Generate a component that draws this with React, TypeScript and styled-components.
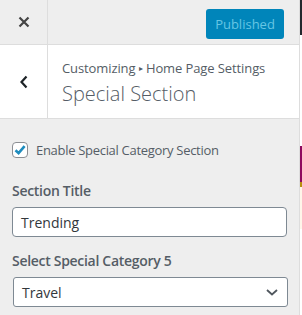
import styled, { createGlobalStyle } from "styled-components";

const GlobalStyle = createGlobalStyle`
    html, body {
        margin: 0;
        padding: 0;
        background: #fff;
    }
    body {
        font-family: "Open Sans", "Noto Sans", sans-serif;
    }
    * {
        box-sizing: border-box;
    }
`

function CloseIcon() {
    return (
        <svg width="12" height="12" viewBox="0 0 12 12">
            <path d="M1.5 1.5 L10.5 10.5 M10.5 1.5 L1.5 10.5" stroke="#444" strokeWidth="2.2" strokeLinecap="butt" />
        </svg>
    )
}

function BackIcon() {
    return (
        <svg width="10" height="14" viewBox="0 0 10 14">
            <path d="M7.5 1.5 L2.5 7 L7.5 12.5" stroke="#1d2327" strokeWidth="2.2" fill="none" />
        </svg>
    )
}

function CheckIcon() {
    return (
        <svg width="14" height="14" viewBox="0 0 14 14">
            <path d="M2.5 7.2 L5.6 10.2 L11.6 3.2" stroke="#1e8cbe" strokeWidth="2.6" fill="none" />
        </svg>
    )
}

function ChevronDown() {
    return (
        <svg width="14" height="10" viewBox="0 0 14 10">
            <path d="M2 3 L7 7.5 L12 3" stroke="#50575e" strokeWidth="1.8" fill="none" />
        </svg>
    )
}

function App() {
    return (
        <Page>
            <GlobalStyle />
            <Sidebar>
                <TopBar>
                    <CloseButton><CloseIcon /></CloseButton>
                    <TopBarSpacer />
                    <PublishButton>Published</PublishButton>
                </TopBar>
                <SectionHeader>
                    <BackButton><BackIcon /></BackButton>
                    <SectionTitleBox>
                        <Breadcrumb>Customizing <Arrow>▸</Arrow> Home Page Settings</Breadcrumb>
                        <SectionName>Special Section</SectionName>
                    </SectionTitleBox>
                </SectionHeader>
                <Controls>
                    <CheckboxRow>
                        <CheckBox><CheckIcon /></CheckBox>
                        <CheckLabel>Enable Special Category Section</CheckLabel>
                    </CheckboxRow>
                    <Field>
                        <FieldLabel>Section Title</FieldLabel>
                        <TextInput>Trending</TextInput>
                    </Field>
                    <Field>
                        <FieldLabel>Select Special Category 5</FieldLabel>
                        <SelectBox>
                            <span>Travel</span>
                            <ChevronDown />
                        </SelectBox>
                    </Field>
                </Controls>
            </Sidebar>
            <Preview>
                <PreviewBlock $height={35} $color="#23282d" />
                <PreviewBlock $height={111} $color="#ffffff" />
                <PreviewBlock $height={36} $color="#8e0a5f" />
                <PreviewBlock $height={5} $color="#b8900f" />
                <PreviewBlock $height={42} $color="#fff6ea" />
            </Preview>
        </Page>
    )
}

const Page = styled.div`
    display: flex;
    width: 302px;
    height: 315px;
    overflow: hidden;
`

const Sidebar = styled.div`
    width: 300px;
    flex-shrink: 0;
    height: 100%;
    background: #eeeeee;
    border-right: 1px solid #dddddd;
    display: flex;
    flex-direction: column;
    & > * {
        flex-shrink: 0;
    }
`

const TopBar = styled.div`
    height: 45px;
    display: flex;
    align-items: center;
    border-bottom: 1px solid #dddddd;
    padding-right: 15px;
`

const CloseButton = styled.div`
    width: 48px;
    height: 100%;
    border-right: 1px solid #dddddd;
    display: flex;
    align-items: center;
    justify-content: center;
`

const TopBarSpacer = styled.div`
    flex: 1;
`

const PublishButton = styled.div`
    width: 78px;
    height: 30px;
    margin-top: 4px;
    background: #0085ba;
    border-radius: 3px;
    color: #66c6e4;
    font-size: 13px;
    display: flex;
    align-items: center;
    justify-content: center;
`

const SectionHeader = styled.div`
    height: 74px;
    background: #ffffff;
    border-bottom: 1px solid #dddddd;
    display: flex;
`

const BackButton = styled.div`
    width: 48px;
    height: 100%;
    border-right: 1px solid #dddddd;
    display: flex;
    align-items: center;
    justify-content: center;
`

const SectionTitleBox = styled.div`
    padding: 14px 0 0 14px;
    display: flex;
    flex-direction: column;
`

const Breadcrumb = styled.div`
    font-size: 13px;
    line-height: 18px;
    letter-spacing: -0.1px;
    color: #555d66;
`

const Arrow = styled.span`
    font-size: 8px;
    position: relative;
    top: -2px;
`

const SectionName = styled.div`
    font-size: 20px;
    font-weight: 300;
    line-height: 30px;
    color: #555d66;
`

const Controls = styled.div`
    padding: 22px 12px 0 12px;
    display: flex;
    flex-direction: column;
`

const CheckboxRow = styled.div`
    display: flex;
    align-items: center;
    gap: 8px;
    margin-bottom: 22px;
`

const CheckBox = styled.div`
    width: 16px;
    height: 16px;
    border: 1px solid #8c8f94;
    border-radius: 4px;
    background: #ffffff;
    display: flex;
    align-items: center;
    justify-content: center;
`

const CheckLabel = styled.span`
    font-size: 13px;
    letter-spacing: -0.3px;
    color: #555d66;
`

const Field = styled.div`
    display: flex;
    flex-direction: column;
    margin-bottom: 14px;
`

const FieldLabel = styled.div`
    font-size: 14px;
    font-weight: 600;
    line-height: 20px;
    letter-spacing: -0.3px;
    color: #555d66;
    margin-bottom: 6px;
`

const TextInput = styled.div`
    width: 275px;
    height: 30px;
    border: 1px solid #7e8993;
    border-radius: 4px;
    background: #ffffff;
    padding: 0 8px;
    font-size: 14px;
    color: #32373c;
    display: flex;
    align-items: center;
`

const SelectBox = styled.div`
    width: 275px;
    height: 30px;
    margin-left: 1px;
    border: 1px solid #7e8993;
    border-radius: 3px;
    background: #ffffff;
    padding: 0 8px;
    font-size: 14px;
    color: #32373c;
    display: flex;
    align-items: center;
    justify-content: space-between;
`

const Preview = styled.div`
    flex: 1;
    display: flex;
    flex-direction: column;
`

const PreviewBlock = styled.div<{ $height: number; $color: string }>`
    height: ${p => p.$height}px;
    background: ${p => p.$color};
    flex-shrink: 0;
`

export default App;
